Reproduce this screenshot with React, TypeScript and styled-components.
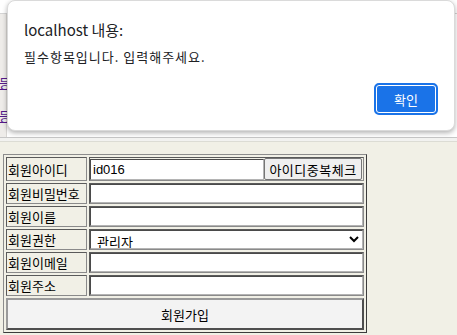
import styled, { createGlobalStyle } from 'styled-components';

const GlobalStyle = createGlobalStyle`
  html, body {
    margin: 0;
    padding: 0;
    background: #ffffff;
  }
  body {
    font-family: 'Noto Sans CJK KR', 'Noto Sans', sans-serif;
  }
`;

const fields = ['회원비밀번호', '회원이름'];
const lowerFields = ['회원이메일', '회원주소'];

const App = () => {
  return (
    <Page>
      <GlobalStyle />
      <TopFrame>
        <HeaderBar />
        <TopBody>
          <SideStrip>
            <MenuLink href="#">등록</MenuLink>
            <MenuLink href="#">등록</MenuLink>
          </SideStrip>
        </TopBody>
      </TopFrame>
      <FrameDivider />
      <BottomFrame>
        <FormTable>
          <tbody>
            <tr>
              <LabelCell>회원아이디</LabelCell>
              <FieldCell>
                <IdRow>
                  <TextInput defaultValue="id016" width={174} />
                  <CheckButton type="button">아이디중복체크</CheckButton>
                </IdRow>
              </FieldCell>
            </tr>
            {fields.map((label) => (
              <tr key={label}>
                <LabelCell>{label}</LabelCell>
                <FieldCell>
                  <TextInput />
                </FieldCell>
              </tr>
            ))}
            <tr>
              <LabelCell>회원권한</LabelCell>
              <FieldCell>
                <RoleSelect defaultValue="admin">
                  <option value="admin">관리자</option>
                  <option value="user">일반회원</option>
                </RoleSelect>
              </FieldCell>
            </tr>
            {lowerFields.map((label) => (
              <tr key={label}>
                <LabelCell>{label}</LabelCell>
                <FieldCell>
                  <TextInput />
                </FieldCell>
              </tr>
            ))}
            <tr>
              <SubmitCell colSpan={2}>
                <SubmitButton type="button">회원가입</SubmitButton>
              </SubmitCell>
            </tr>
          </tbody>
        </FormTable>
      </BottomFrame>

      <AlertDialog>
        <AlertTitle>localhost 내용:</AlertTitle>
        <AlertMessage>필수항목입니다. 입력해주세요.</AlertMessage>
        <AlertActions>
          <ConfirmButton type="button">확인</ConfirmButton>
        </AlertActions>
      </AlertDialog>
    </Page>
  );
};

export default App;

const Page = styled.div`
  position: relative;
  width: 457px;
  height: 335px;
  overflow: hidden;
  display: flex;
  flex-direction: column;
`;

const TopFrame = styled.div`
  height: 137px;
  display: flex;
  flex-direction: column;
  background: #ffffff;
`;

const HeaderBar = styled.div`
  height: 13px;
  border-bottom: 1px solid #d4d4d4;
  background: #ffffff;
`;

const TopBody = styled.div`
  flex: 1;
  display: flex;
`;

// the strip lies under the alert; its links run on beneath the dialog
const SideStrip = styled.div`
  width: 6px;
  border-right: 1px solid #d8d6d3;
  background: #eeece9;
  display: flex;
  flex-direction: column;
  gap: 17px;
  padding-top: 61px;
`;

const MenuLink = styled.a`
  display: block;
  margin-left: -1px;
  white-space: nowrap;
  font-size: 13px;
  line-height: 16px;
  color: #551a8b;
  text-decoration: underline;
`;

const FrameDivider = styled.div`
  height: 3px;
  border-top: 1px solid #c6c6c6;
  border-bottom: 1px solid #dcdcd4;
  background: #f2f2f0;
`;

const BottomFrame = styled.div`
  flex: 1;
  background: #f1f0e6;
  padding: 12px 0 0 3px;
`;

const FormTable = styled.table`
  width: 364px;
  border-collapse: separate;
  border-spacing: 2px;
  border: 1px solid;
  border-color: #8c8c8c #3c3c3c #3c3c3c #8c8c8c;
  font-size: 13px;
  color: #000000;
`;

const LabelCell = styled.td`
  width: 78px;
  padding: 0 0 0 1px;
  height: 19px;
  line-height: 19px;
  white-space: nowrap;
  border: 1px solid;
  border-color: #5a5a5a #8a8a8a #8a8a8a #5a5a5a;
  background: #f1f0e6;
  box-sizing: content-box;
`;

const FieldCell = styled.td`
  padding: 0;
  border: 1px solid;
  border-color: #5a5a5a #8a8a8a #8a8a8a #5a5a5a;
`;

const IdRow = styled.div`
  display: flex;
  align-items: center;
  justify-content: space-between;
  height: 22px;
`;

const TextInput = styled.input<{ width?: number }>`
  display: block;
  box-sizing: border-box;
  width: ${({ width }) => (width ? `${width}px` : '100%')};
  height: ${({ width }) => (width ? '21px' : '19px')};
  margin: 0;
  padding: 0 2px;
  border: 1px solid;
  border-color: #4a4a4a #b4b4b4 #b4b4b4 #4a4a4a;
  background: #ffffff;
  font-family: 'Liberation Sans', Arial, sans-serif;
  font-size: 13px;
  color: #000000;
  outline: none;
`;

const CheckButton = styled.button`
  box-sizing: border-box;
  width: 98px;
  height: 22px;
  margin: 0 1px 0 0;
  padding: 0;
  border: 1px solid #767676;
  border-radius: 2px;
  background: #efefef;
  font-family: 'Noto Sans CJK KR', sans-serif;
  font-size: 13px;
  letter-spacing: 0.5px;
  color: #000000;
  white-space: nowrap;
`;

const RoleSelect = styled.select`
  display: block;
  box-sizing: border-box;
  width: 100%;
  height: 19px;
  margin: 0;
  padding: 0 2px;
  border: 1px solid;
  border-color: #4a4a4a #b4b4b4 #b4b4b4 #4a4a4a;
  background: #ffffff;
  font-family: 'Noto Sans CJK KR', sans-serif;
  font-size: 13px;
  color: #000000;
`;

const SubmitCell = styled.td`
  padding: 0;
  border: none;
`;

const SubmitButton = styled.button`
  display: block;
  box-sizing: border-box;
  width: 100%;
  height: 32px;
  margin: 0;
  border: 2px solid;
  border-color: #9a9a9a #4e4e4e #4e4e4e #9a9a9a;
  background: #f3f3f3;
  font-family: 'Noto Sans CJK KR', sans-serif;
  font-size: 13px;
  color: #000000;
`;

const AlertDialog = styled.div`
  position: absolute;
  left: 7px;
  top: 0;
  width: 448px;
  height: 131px;
  box-sizing: border-box;
  padding: 19px 16px 0 16px;
  background: #ffffff;
  border: 1px solid #dadada;
  border-radius: 8px;
  box-shadow: 0 2px 5px rgba(0, 0, 0, 0.3);
  display: flex;
  flex-direction: column;
`;

const AlertTitle = styled.div`
  font-size: 15px;
  line-height: 20px;
  color: #202124;
`;

const AlertMessage = styled.div`
  margin-top: 8px;
  font-size: 13px;
  line-height: 18px;
  letter-spacing: 1px;
  color: #202124;
`;

const AlertActions = styled.div`
  display: flex;
  justify-content: flex-end;
  margin-top: 17px;
`;

const ConfirmButton = styled.button`
  box-sizing: border-box;
  width: 64px;
  height: 32px;
  padding: 0;
  border: 2px solid #1a73e8;
  border-radius: 5px;
  box-shadow: inset 0 0 0 1px #ffffff;
  background: #1a73e8;
  font-family: 'Noto Sans CJK KR', sans-serif;
  font-size: 13px;
  color: #ffffff;
`;
